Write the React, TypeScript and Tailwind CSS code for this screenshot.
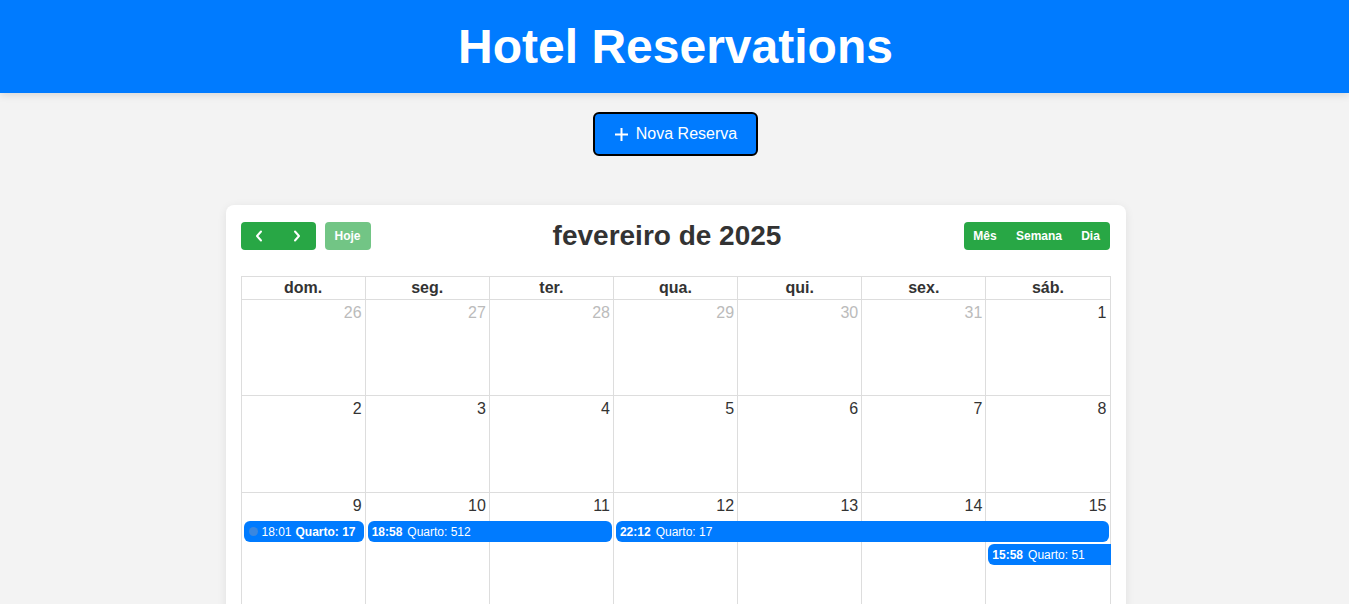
import React from "react";

type Ev = { start: number; span: number; row: number; time: string; title: string; dot?: boolean; contRight?: boolean; contLeft?: boolean };
type Week = { days: { n: number; other?: boolean }[]; events: Ev[]; h: string };

const weeks: Week[] = [
  { h: "h-[96px]", days: [26, 27, 28, 29, 30, 31].map((n) => ({ n, other: true })).concat([{ n: 1, other: false }]), events: [] },
  { h: "h-[97px]", days: [2, 3, 4, 5, 6, 7, 8].map((n) => ({ n })), events: [] },
  {
    h: "h-[130px]",
    days: [9, 10, 11, 12, 13, 14, 15].map((n) => ({ n })),
    events: [
      { start: 1, span: 1, row: 2, time: "18:01", title: "Quarto: 17", dot: true },
      { start: 2, span: 2, row: 2, time: "18:58", title: "Quarto: 512" },
      { start: 4, span: 4, row: 2, time: "22:12", title: "Quarto: 17" },
      { start: 7, span: 1, row: 3, time: "15:58", title: "Quarto: 51", contRight: true },
    ],
  },
];

const colStart = ["", "col-start-1", "col-start-2", "col-start-3", "col-start-4", "col-start-5", "col-start-6", "col-start-7"];
const colSpan = ["", "col-span-1", "col-span-2", "col-span-3", "col-span-4", "col-span-5", "col-span-6", "col-span-7"];
const cellCol = ["col-start-1", "col-start-2", "col-start-3", "col-start-4", "col-start-5", "col-start-6", "col-start-7"];

function EventBar({ e }: { e: Ev }) {
  const rowCls = e.row === 2 ? "row-start-2" : "row-start-3";
  const rounded = e.contRight ? "rounded-l-[6px] mr-0" : e.contLeft ? "rounded-r-[6px] ml-0" : "rounded-[6px] mr-[2px]";
  return (
    <div
      className={`${colStart[e.start]} ${colSpan[e.span]} ${rowCls} ${e.contLeft ? "" : "ml-[2px]"} ${rounded} z-10 h-[21px] bg-[#007bff] text-white text-[12px] flex items-center pl-1 whitespace-nowrap overflow-hidden`}
    >
      {e.dot ? (
        <>
          <span className="w-[9px] h-[9px] rounded-full bg-[#3a87e0] mr-[4px] ml-[1px]" />
          <span>{e.time}</span>
          <span className="font-bold ml-[4px]">{e.title}</span>
        </>
      ) : (
        <>
          {e.time && <span className="font-bold mr-[5px]">{e.time}</span>}
          <span>{e.title}</span>
        </>
      )}
    </div>
  );
}

export default function App() {
  const dayNames = ["dom.", "seg.", "ter.", "qua.", "qui.", "sex.", "sáb."];
  return (
    <div className="min-h-screen bg-[#f3f3f3] text-[#333]" style={{ fontFamily: '"Liberation Sans", Arial, sans-serif' }}>
      <header className="h-[93px] bg-[#007bff] flex items-center justify-center pl-[2px] shadow-[0_2px_8px_rgba(0,0,0,0.12)] relative">
        <h1 className="text-white font-bold text-[48px] leading-none">Hotel Reservations</h1>
      </header>

      <div className="flex justify-center pt-[19px] pl-[2px]">
        <button className="w-[165px] h-[44px] bg-[#007bff] border-2 border-black rounded-[6px] text-white text-[16px] flex items-center justify-center gap-[7px]">
          <svg width="15" height="15" viewBox="0 0 15 15" fill="none" stroke="white" strokeWidth="2">
            <path d="M7.5 1v13M1 7.5h13" />
          </svg>
          <span>Nova Reserva</span>
        </button>
      </div>

      <div className="flex justify-center pt-[49px] pl-[2px]">
        <div className="w-[900px] bg-white rounded-[8px] shadow-[0_2px_10px_rgba(0,0,0,0.08)] pl-[15px] pr-[15px] pt-[17px] pb-4">
          <div className="flex items-center justify-between h-[28px] mb-[26px]">
            <div className="flex items-center gap-[9px]">
              <div className="flex h-[28px] w-[75px] rounded-[4px] bg-[#28a745] overflow-hidden">
                <button className="flex-1 flex items-center justify-center">
                  <svg width="8" height="12" viewBox="0 0 8 12" fill="none" stroke="white" strokeWidth="2" strokeLinecap="round" strokeLinejoin="round">
                    <path d="M6 1.5L2 6l4 4.5" />
                  </svg>
                </button>
                <button className="flex-1 flex items-center justify-center">
                  <svg width="8" height="12" viewBox="0 0 8 12" fill="none" stroke="white" strokeWidth="2" strokeLinecap="round" strokeLinejoin="round">
                    <path d="M2 1.5L6 6l-4 4.5" />
                  </svg>
                </button>
              </div>
              <button className="h-[28px] w-[46px] rounded-[4px] bg-[#28a745] opacity-65 text-white text-[12px] font-bold">Hoje</button>
            </div>
            <h2 className="text-[28px] font-bold leading-none text-[#333]">fevereiro de 2025</h2>
            <div className="flex h-[28px] mr-[1px] rounded-[4px] bg-[#28a745] text-white text-[12px] font-bold">
              <button className="w-[43px]">Mês</button>
              <button className="w-[65px]">Semana</button>
              <button className="w-[38px]">Dia</button>
            </div>
          </div>

          <div className="w-[870px] border-l border-t border-[#ddd]">
            <div className="grid grid-cols-7">
              {dayNames.map((d) => (
                <div key={d} className="h-[23px] border-r border-b border-[#ddd] text-center font-bold text-[16px] leading-[22px] text-[#333]">
                  {d}
                </div>
              ))}
            </div>
            {weeks.map((w, wi) => (
              <div key={wi} className={`grid grid-cols-7 grid-rows-[28px_23px_21px_1fr] ${w.h}`}>
                {w.days.map((d, di) => (
                  <div key={`c${di}`} className={`${cellCol[di]} row-start-1 row-span-4 border-r border-b border-[#ddd]`} />
                ))}
                {w.days.map((d, di) => (
                  <div
                    key={`n${di}`}
                    className={`${cellCol[di]} row-start-1 text-right pr-1 pt-[4px] text-[16px] leading-[18px] ${d.other ? "text-[#bbb]" : "text-[#333]"}`}
                  >
                    {d.n}
                  </div>
                ))}
                {w.events.map((e, ei) => (
                  <EventBar key={ei} e={e} />
                ))}
              </div>
            ))}
          </div>
        </div>
      </div>
    </div>
  );
}
